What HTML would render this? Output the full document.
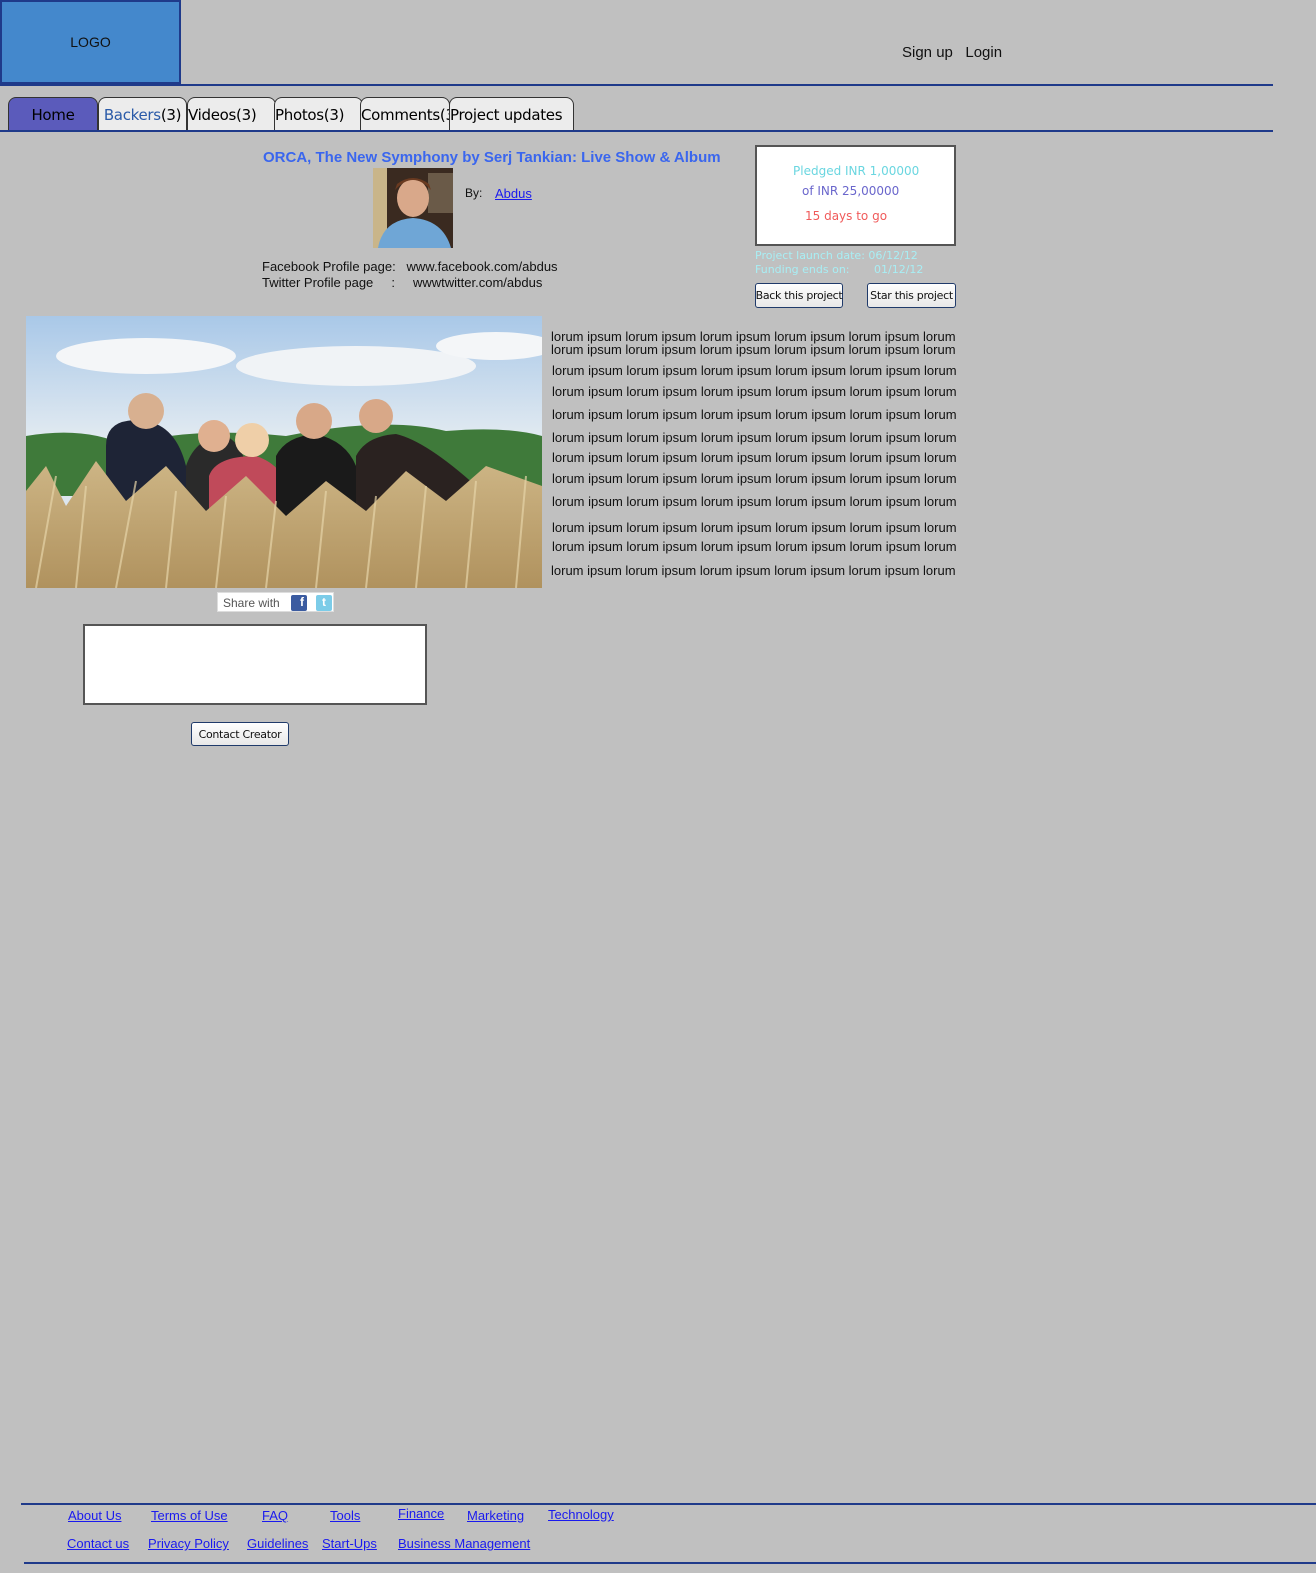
<!DOCTYPE html>
<html><head><meta charset="utf-8">
<style>
*{margin:0;padding:0;box-sizing:border-box}
body{width:1316px;height:1573px;background:#c0c0c0;position:relative;font-family:"Liberation Sans",Arial,sans-serif;overflow:hidden}
.a{position:absolute;white-space:nowrap}
.logo{left:0;top:0;width:181px;height:84px;background:#4488cc;border:2px solid #1f3a8a;font-size:14px;color:#111;display:flex;align-items:center;justify-content:center}
.hl{height:2px;background:#1f3a8a}
.tab{top:97px;height:35px;border:1px solid #333;border-bottom:none;border-radius:8px 8px 0 0;background:#ececec;font-family:"DejaVu Sans",sans-serif;font-size:15px;padding-top:8px;text-align:center;letter-spacing:-0.3px}
.lor{font-size:13px;color:#111;left:551px}
.foot{font-size:13px;color:#1a1aee;text-decoration:underline}
.btn{background:linear-gradient(#fff,#e8e8e8);border:1px solid #1f3a6a;border-radius:3px;font-family:"DejaVu Sans",sans-serif;font-size:11px;color:#111;display:flex;align-items:center;justify-content:center;letter-spacing:-0.3px}
.sk{background:#fff;border:2px solid #555}
</style></head><body>
<div class="a logo">LOGO</div>
<div class="a" style="left:902px;top:44px;font-size:15px;color:#111">Sign up&nbsp;&nbsp;&nbsp;Login</div>
<div class="a hl" style="left:0;top:84px;width:1273px"></div>

<div class="a tab" style="left:8px;width:90px;background:#5b5bbb;color:#000">Home</div>
<div class="a tab" style="left:98px;width:89px"><span style="color:#2a5aa8">Backers</span>(3)</div>
<div class="a tab" style="left:187px;width:89px;text-align:left">Videos(3)</div>
<div class="a tab" style="left:274px;width:89px;text-align:left">Photos(3)</div>
<div class="a tab" style="left:360px;width:90px;text-align:left;overflow:hidden">Comments(3</div>
<div class="a tab" style="left:449px;width:125px;text-align:left">Project updates</div>
<div class="a hl" style="left:0;top:130px;width:1273px"></div>

<div class="a" style="left:263px;top:149px;font-size:15px;font-weight:bold;color:#3a66ee">ORCA, The New Symphony by Serj Tankian: Live Show &amp; Album</div>
<svg class="a" style="left:373px;top:168px" width="80" height="80" viewBox="0 0 80 80">
<rect width="80" height="80" fill="#3a2a20"/><rect x="0" y="0" width="14" height="80" fill="#c9b58a"/><rect x="55" y="5" width="25" height="40" fill="#6a5a48"/>
<ellipse cx="40" cy="30" rx="16" ry="19" fill="#d9a88a"/><path d="M22 22 Q40 2 58 22 L56 16 Q40 4 24 16Z" fill="#6a3a20"/>
<path d="M5 80 Q10 52 40 50 Q70 52 78 80Z" fill="#6fa6d6"/></svg>
<div class="a" style="left:465px;top:186px;font-size:12px;color:#111">By:</div>
<div class="a" style="left:495px;top:186px;font-size:13px;color:#1a1aee;text-decoration:underline">Abdus</div>
<div class="a" style="left:262px;top:259px;font-size:13px;color:#111;line-height:16px">Facebook Profile page:&nbsp;&nbsp; www.facebook.com/abdus<br>Twitter Profile page&nbsp;&nbsp;&nbsp;&nbsp; :&nbsp;&nbsp;&nbsp;&nbsp; wwwtwitter.com/abdus</div>

<div class="a sk" style="left:755px;top:145px;width:201px;height:101px"></div>
<div class="a" style="left:793px;top:164px;font-family:'DejaVu Sans',sans-serif;font-size:12px;color:#6ad6e0">Pledged INR 1,00000</div>
<div class="a" style="left:802px;top:184px;font-family:'DejaVu Sans',sans-serif;font-size:12px;color:#6a66cc">of INR 25,00000</div>
<div class="a" style="left:805px;top:209px;font-family:'DejaVu Sans',sans-serif;font-size:12px;color:#f05a5a">15 days to go</div>
<div class="a" style="left:755px;top:249px;font-family:'DejaVu Sans',sans-serif;font-size:11px;color:#a8eef4;line-height:14px">Project launch date: 06/12/12<br>Funding ends on:&nbsp;&nbsp;&nbsp;&nbsp;&nbsp;&nbsp; 01/12/12</div>
<div class="a btn" style="left:755px;top:283px;width:88px;height:25px">Back this project</div>
<div class="a btn" style="left:867px;top:283px;width:89px;height:25px">Star this project</div>

<svg class="a" style="left:26px;top:316px" width="516" height="272" viewBox="0 0 516 272">
<defs><linearGradient id="s" x1="0" y1="0" x2="0" y2="1"><stop offset="0" stop-color="#a9c8e8"/><stop offset=".5" stop-color="#e8eef2"/><stop offset="1" stop-color="#c8d8e8"/></linearGradient>
<linearGradient id="w" x1="0" y1="0" x2="0" y2="1"><stop offset="0" stop-color="#cdb585"/><stop offset="1" stop-color="#b0925e"/></linearGradient></defs>
<rect width="516" height="272" fill="url(#s)"/>
<ellipse cx="120" cy="40" rx="90" ry="18" fill="#f4f6f8"/><ellipse cx="330" cy="50" rx="120" ry="20" fill="#f0f3f6"/><ellipse cx="470" cy="30" rx="60" ry="14" fill="#f4f6f8"/>
<path d="M0 120 Q60 110 100 130 Q160 110 260 120 Q360 100 420 115 Q480 110 516 120 L516 180 L0 180Z" fill="#3f7a3a"/>
<path d="M80 130 Q80 100 120 105 Q150 110 160 150 L160 230 L80 230Z" fill="#1e2436"/>
<circle cx="120" cy="95" r="18" fill="#d8b090"/>
<path d="M160 150 Q170 120 200 120 Q220 130 220 160 L220 230 L160 230Z" fill="#2a2a2a"/>
<circle cx="188" cy="120" r="16" fill="#e0b090"/>
<path d="M183 160 Q190 140 230 140 Q260 150 262 180 L262 240 L183 240Z" fill="#c04a5a"/>
<circle cx="226" cy="124" r="17" fill="#efcfa8"/>
<path d="M250 140 Q260 120 290 118 Q320 125 330 150 L330 240 L250 240Z" fill="#1a1a1a"/>
<circle cx="288" cy="105" r="18" fill="#d8a888"/>
<path d="M330 140 Q340 120 370 118 Q400 125 450 170 L450 230 L330 230Z" fill="#2a2220"/>
<circle cx="350" cy="100" r="17" fill="#d8a888"/>
<path d="M0 175 L20 150 L40 190 L70 145 L100 185 L140 150 L180 195 L220 160 L260 200 L300 165 L340 195 L380 155 L420 185 L460 150 L516 170 L516 272 L0 272Z" fill="url(#w)"/>
<g stroke="#e6d4a8" stroke-width="2" opacity=".7"><path d="M10 272 L30 160 M50 272 L60 170 M90 272 L110 165 M140 272 L150 175 M190 272 L200 180 M240 272 L250 185 M290 272 L300 175 M340 272 L350 180 M390 272 L400 170 M440 272 L450 165 M490 272 L500 160"/></g>
</svg>

<div class="a" style="left:217px;top:592px;width:117px;height:20px;background:#fff;border:1px solid #ddd;font-size:12px;color:#555;padding:3px 0 0 5px">Share with
<span style="position:absolute;left:73px;top:2px;width:16px;height:16px;background:#3b5ba0;border-radius:2px;color:#fff;font-weight:bold;font-size:12px;text-align:right;padding-right:3px">f</span>
<span style="position:absolute;left:98px;top:2px;width:16px;height:16px;background:#7ccce8;border-radius:2px;color:#fff;font-weight:bold;font-size:12px;text-align:center">t</span></div>

<div class="a sk" style="left:83px;top:624px;width:344px;height:81px"></div>
<div class="a btn" style="left:191px;top:722px;width:98px;height:24px">Contact Creator</div>

<div class="a lor" style="top:329px">lorum ipsum lorum ipsum lorum ipsum lorum ipsum lorum ipsum lorum</div>
<div class="a lor" style="top:342px">lorum ipsum lorum ipsum lorum ipsum lorum ipsum lorum ipsum lorum</div>
<div class="a lor" style="top:363px;left:552px">lorum ipsum lorum ipsum lorum ipsum lorum ipsum lorum ipsum lorum</div>
<div class="a lor" style="top:384px;left:552px">lorum ipsum lorum ipsum lorum ipsum lorum ipsum lorum ipsum lorum</div>
<div class="a lor" style="top:407px;left:552px">lorum ipsum lorum ipsum lorum ipsum lorum ipsum lorum ipsum lorum</div>
<div class="a lor" style="top:430px;left:552px">lorum ipsum lorum ipsum lorum ipsum lorum ipsum lorum ipsum lorum</div>
<div class="a lor" style="top:450px;left:552px">lorum ipsum lorum ipsum lorum ipsum lorum ipsum lorum ipsum lorum</div>
<div class="a lor" style="top:471px;left:552px">lorum ipsum lorum ipsum lorum ipsum lorum ipsum lorum ipsum lorum</div>
<div class="a lor" style="top:494px;left:552px">lorum ipsum lorum ipsum lorum ipsum lorum ipsum lorum ipsum lorum</div>
<div class="a lor" style="top:520px;left:552px">lorum ipsum lorum ipsum lorum ipsum lorum ipsum lorum ipsum lorum</div>
<div class="a lor" style="top:539px;left:552px">lorum ipsum lorum ipsum lorum ipsum lorum ipsum lorum ipsum lorum</div>
<div class="a lor" style="top:563px">lorum ipsum lorum ipsum lorum ipsum lorum ipsum lorum ipsum lorum</div>

<div class="a hl" style="left:21px;top:1503px;width:1295px"></div>
<div class="a foot" style="left:68px;top:1508px">About Us</div>
<div class="a foot" style="left:151px;top:1508px">Terms of Use</div>
<div class="a foot" style="left:262px;top:1508px">FAQ</div>
<div class="a foot" style="left:330px;top:1508px">Tools</div>
<div class="a foot" style="left:398px;top:1506px">Finance</div>
<div class="a foot" style="left:467px;top:1508px">Marketing</div>
<div class="a foot" style="left:548px;top:1507px">Technology</div>
<div class="a foot" style="left:67px;top:1536px">Contact us</div>
<div class="a foot" style="left:148px;top:1536px">Privacy Policy</div>
<div class="a foot" style="left:247px;top:1536px">Guidelines</div>
<div class="a foot" style="left:322px;top:1536px">Start-Ups</div>
<div class="a foot" style="left:398px;top:1536px">Business Management</div>
<div class="a hl" style="left:24px;top:1562px;width:1292px"></div>
</body></html>
